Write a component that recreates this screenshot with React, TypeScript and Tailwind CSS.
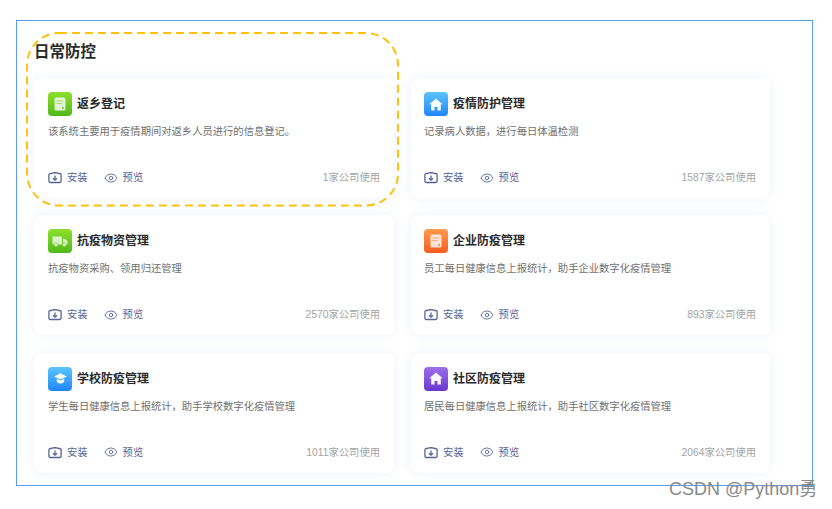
import React from 'react';
import { Eye } from 'lucide-react';

type IconKind = 'doc' | 'home' | 'truck' | 'cap';

interface AppCard {
  name: string;
  desc: string;
  count: string;
  icon: IconKind;
  bg: string;
}

const cards: AppCard[] = [
  { name: '返乡登记', desc: '该系统主要用于疫情期间对返乡人员进行的信息登记。', count: '1家公司使用', icon: 'doc', bg: 'bg-gradient-to-b from-[#8ee02c] to-[#4fb81c] text-[#5cc021]' },
  { name: '疫情防护管理', desc: '记录病人数据，进行每日体温检测', count: '1587家公司使用', icon: 'home', bg: 'bg-gradient-to-b from-[#5cc4fb] to-[#1e86fa] text-[#2b90fa]' },
  { name: '抗疫物资管理', desc: '抗疫物资采购、领用归还管理', count: '2570家公司使用', icon: 'truck', bg: 'bg-gradient-to-b from-[#8ee02c] to-[#4fb81c] text-[#6ac825]' },
  { name: '企业防疫管理', desc: '员工每日健康信息上报统计，助手企业数字化疫情管理', count: '893家公司使用', icon: 'doc', bg: 'bg-gradient-to-b from-[#fb9a4e] to-[#f9591f] text-[#f96a2c]' },
  { name: '学校防疫管理', desc: '学生每日健康信息上报统计，助手学校数字化疫情管理', count: '1011家公司使用', icon: 'cap', bg: 'bg-gradient-to-b from-[#5cc4fb] to-[#1e86fa] text-[#2b90fa]' },
  { name: '社区防疫管理', desc: '居民每日健康信息上报统计，助手社区数字化疫情管理', count: '2064家公司使用', icon: 'home', bg: 'bg-gradient-to-b from-[#a06ee8] to-[#6a35cf] text-[#7a45d8]' },
];

function CardIcon({ kind }: { kind: IconKind }) {
  if (kind === 'doc') {
    return (
      <svg width="12" height="14" viewBox="0 0 12 14">
        <rect x="0.500" y="0.500" width="11" height="13" rx="1.500" fill="#fff" fillOpacity="0.8" />
        <path d="M2.500 4h7M2.500 6.500h5" stroke="currentColor" strokeOpacity="0.5" strokeWidth="1" />
        <circle cx="9" cy="11" r="0.900" fill="currentColor" />
      </svg>
    );
  }
  if (kind === 'home') {
    return (
      <svg width="14" height="13" viewBox="0 0 14 13">
        <path d="M7 0.500 13.700 6.300 11.800 6.300V12.500H8.500V9H5.500V12.500H2.200V6.300H0.300Z" fill="#fff" fillOpacity="0.95" />
      </svg>
    );
  }
  if (kind === 'truck') {
    return (
      <svg width="16" height="11" viewBox="0 0 16 11">
        <path d="M0.500 0.500h9.500v8H0.500ZM11 3h2.500l2 2.500v3H11Z" fill="#fff" fillOpacity="0.75" />
        <circle cx="4" cy="8.700" r="1.900" fill="#fff" stroke="currentColor" strokeWidth="0.800" />
        <circle cx="12.300" cy="8.700" r="1.900" fill="#fff" stroke="currentColor" strokeWidth="0.800" />
      </svg>
    );
  }
  return (
    <svg width="13" height="11" viewBox="0 0 13 11">
      <path d="M6.500 0.300 12.800 3.400 6.500 6.500 0.200 3.400Z" fill="#fff" />
      <path d="M2.800 5.700 6.500 7.600 10.200 5.700V8.500C8.500 11.200 4.500 11.200 2.800 8.500Z" fill="#fff" />
    </svg>
  );
}

function InstallIcon() {
  return (
    <svg width="14" height="13" viewBox="0 0 14 13" fill="none" stroke="#5a6493" strokeWidth="1.300">
      <path d="M4 2.500H2.200a1.300 1.300 0 0 0-1.300 1.300v6.400a1.300 1.300 0 0 0 1.300 1.300h9.600a1.300 1.300 0 0 0 1.300-1.300V3.800a1.300 1.300 0 0 0-1.300-1.300H10" />
      <path d="M4 2.500C4.500 1.500 9.500 1.500 10 2.500" />
      <path d="M7 4.500v4.500M5 7.200 7 9.200 9 7.200" />
    </svg>
  );
}

function Card({ card }: { card: AppCard }) {
  return (
    <div className="flex h-[120px] flex-col rounded-lg bg-white pt-[14px] pr-[14px] pb-[13px] shadow-[0_0_12px_rgba(120,150,240,0.12)] odd:pl-[14px] even:pl-[13px]">
      <div className="flex items-center gap-[5px]">
        <div className={`flex h-6 w-6 items-center justify-center rounded-[4px] ${card.bg}`}>
          <CardIcon kind={card.icon} />
        </div>
        <span className="text-[12px] leading-6 font-bold text-[#2a2a2a]">{card.name}</span>
      </div>
      <p className="mt-[8px] text-[10.3px] leading-[16px] text-[#6f6f6f]">{card.desc}</p>
      <div className="mt-auto flex items-center text-[10.3px] leading-[14px]">
        <div className="-mt-[1px] flex">
          <InstallIcon />
        </div>
        <span className="ml-[5px] text-[#5a6493]">安装</span>
        <Eye size={14} strokeWidth={1.500} className="ml-[16px] -mt-[1px] text-[#5a6493]" />
        <span className="ml-[5px] text-[#5a6493]">预览</span>
        <span className="ml-auto text-[#a3a3a3]">{card.count}</span>
      </div>
    </div>
  );
}

export default function App() {
  return (
    <div
      className="relative h-[509px] w-[832px] overflow-hidden bg-white pt-[20px] pl-[16px]"
      style={{ fontFamily: '"Liberation Sans", "Noto Sans CJK SC", sans-serif' }}
    >
      <div className="h-[466px] w-[797px] border border-[#5b9bec] pt-[20px] pl-[17px]">
        <h2 className="text-[15.500px] leading-[22px] font-bold text-[#2a2a2a]">日常防控</h2>
        <div className="mt-[15px] grid grid-cols-[360px_359px] gap-x-[17px] gap-y-[17.400px]">
          {cards.map((card) => (
            <Card key={card.name} card={card} />
          ))}
        </div>
      </div>

      {/* annotation + watermark sit on top of the page */}
      <svg className="absolute top-[32px] left-[26px]" width="374" height="176">
        <rect x="1" y="1" width="371" height="172.500" rx="32" fill="none" stroke="#fec10e" strokeWidth="2" strokeDasharray="8 5" />
      </svg>
      <span className="absolute top-[478px] left-[669px] text-[18px] leading-[22px] text-[#8a8a8a]">CSDN @Python勇</span>
    </div>
  );
}
